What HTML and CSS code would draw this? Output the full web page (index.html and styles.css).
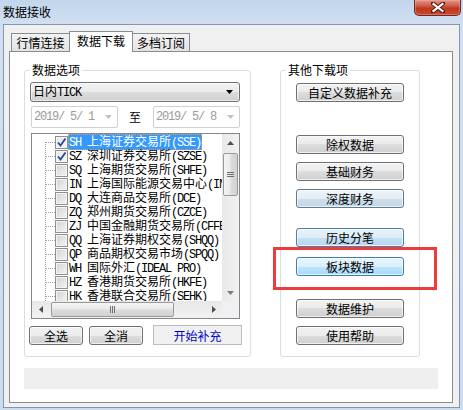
FILE: index.html
```html
<!DOCTYPE html>
<html lang="zh-CN">
<head>
<meta charset="utf-8">
<title>数据接收</title>
<link rel="stylesheet" href="styles.css">
</head>
<body>
<div class="titlebar">
  <span class="title">数据接收</span>
  <button class="close" aria-label="关闭">
    <svg width="14" height="11" viewBox="0 0 14 11"><path d="M2 1.5 L12 9.5 M12 1.5 L2 9.5" stroke="#4a1a12" stroke-width="4" stroke-linecap="square"/><path d="M2.5 2 L11.5 9 M11.5 2 L2.5 9" stroke="#fff" stroke-width="2.2" stroke-linecap="square"/></svg>
  </button>
</div>
<div class="client">
  <div class="tabs">
    <div class="tab">行情连接</div>
    <div class="tab active">数据下载</div>
    <div class="tab">多档订阅</div>
  </div>
  <div class="panel">
    <div class="groups">
      <section class="group group-left">
        <div class="group-title">数据选项</div>
        <div class="combo">
          <span>日内<span class="a">TICK</span></span>
          <svg width="7" height="4" viewBox="0 0 7 4"><path d="M0 0 H7 L3.5 4Z" fill="#000"/></svg>
        </div>
        <div class="date-row">
          <div class="date"><span class="a">2019/ 5/ 1</span><svg width="7" height="4" viewBox="0 0 7 4"><path d="M0 0 H7 L3.5 4Z" fill="#c2c2c2"/></svg></div>
          <span class="to">至</span>
          <div class="date date2"><span class="a">2019/ 5/ 8</span><svg width="7" height="4" viewBox="0 0 7 4"><path d="M0 0 H7 L3.5 4Z" fill="#c2c2c2"/></svg></div>
        </div>
        <div class="list">
          <div class="items">
            <div class="row"><span class="branch"></span><span class="cb checked"><svg width="11" height="11" viewBox="0 0 11 11"><path d="M2 5.5 L4.5 8.5 L9.5 1.5" fill="none" stroke="#2b4c9c" stroke-width="1.9"/></svg></span><span class="label sel"><span class="a">SH </span>上海证券交易所<span class="a">(SSE)</span></span></div>
            <div class="row"><span class="branch"></span><span class="cb checked"><svg width="11" height="11" viewBox="0 0 11 11"><path d="M2 5.5 L4.5 8.5 L9.5 1.5" fill="none" stroke="#2b4c9c" stroke-width="1.9"/></svg></span><span class="label"><span class="a">SZ </span>深圳证券交易所<span class="a">(SZSE)</span></span></div>
            <div class="row"><span class="branch"></span><span class="cb"></span><span class="label"><span class="a">SQ </span>上海期货交易所<span class="a">(SHFE)</span></span></div>
            <div class="row"><span class="branch"></span><span class="cb"></span><span class="label"><span class="a">IN </span>上海国际能源交易中心<span class="a">(INE)</span></span></div>
            <div class="row"><span class="branch"></span><span class="cb"></span><span class="label"><span class="a">DQ </span>大连商品交易所<span class="a">(DCE)</span></span></div>
            <div class="row"><span class="branch"></span><span class="cb"></span><span class="label"><span class="a">ZQ </span>郑州期货交易所<span class="a">(CZCE)</span></span></div>
            <div class="row"><span class="branch"></span><span class="cb"></span><span class="label"><span class="a">ZJ </span>中国金融期货交易所<span class="a">(CFFEX)</span></span></div>
            <div class="row"><span class="branch"></span><span class="cb"></span><span class="label"><span class="a">QQ </span>上海证券期权交易<span class="a">(SHQQ)</span></span></div>
            <div class="row"><span class="branch"></span><span class="cb"></span><span class="label"><span class="a">QP </span>商品期权交易市场<span class="a">(SPQQ)</span></span></div>
            <div class="row"><span class="branch"></span><span class="cb"></span><span class="label"><span class="a">WH </span>国际外汇<span class="a">(IDEAL PRO)</span></span></div>
            <div class="row"><span class="branch"></span><span class="cb"></span><span class="label"><span class="a">HZ </span>香港期货交易所<span class="a">(HKFE)</span></span></div>
            <div class="row"><span class="branch"></span><span class="cb"></span><span class="label"><span class="a">HK </span>香港联合交易所<span class="a">(SEHK)</span></span></div>
          </div>
          <div class="vscroll">
            <span class="sb-btn"><svg width="7" height="4" viewBox="0 0 7 4"><path d="M0 4 L3.5 0 L7 4Z" fill="#4d4d4d"/></svg></span>
            <span class="vthumb"><svg width="7" height="5" viewBox="0 0 7 5"><path d="M0 0.5 H7 M0 2.5 H7 M0 4.5 H7" stroke="#6f6f6f" stroke-width="1"/></svg></span>
            <span class="sb-fill"></span>
            <span class="sb-btn"><svg width="7" height="4" viewBox="0 0 7 4"><path d="M0 0 H7 L3.5 4Z" fill="#7a7a7a"/></svg></span>
          </div>
          <div class="hscroll">
            <span class="sb-btn"><svg width="4" height="7" viewBox="0 0 4 7"><path d="M4 0 L0 3.5 L4 7Z" fill="#4d4d4d"/></svg></span>
            <span class="hthumb"><svg width="5" height="7" viewBox="0 0 5 7"><path d="M0.5 0 V7 M2.5 0 V7 M4.5 0 V7" stroke="#6f6f6f" stroke-width="1"/></svg></span>
            <span class="sb-fill"></span>
            <span class="sb-btn"><svg width="4" height="7" viewBox="0 0 4 7"><path d="M0 0 L4 3.5 L0 7Z" fill="#4d4d4d"/></svg></span>
          </div>
          <div class="corner"></div>
        </div>
        <div class="btn-row">
          <button class="btn small">全选</button>
          <button class="btn small">全消</button>
          <button class="btn-flat">开始补充</button>
        </div>
      </section>
      <section class="group group-right">
        <div class="group-title">其他下载项</div>
        <button class="btn wide m1">自定义数据补充</button>
        <button class="btn wide m2">除权数据</button>
        <button class="btn wide m3">基础财务</button>
        <button class="btn wide m3 soft">深度财务</button>
        <button class="btn wide m4 soft2">历史分笔</button>
        <button class="btn wide m5 hot">板块数据</button>
        <button class="btn wide m6">数据维护</button>
        <button class="btn wide m3">使用帮助</button>
      </section>
    </div>
    <div class="status"></div>
    <div class="mark"></div>
  </div>
</div>
</body>
</html>
```

FILE: styles.css
```css
* { box-sizing: border-box; }
html, body { margin: 0; }
body {
  width: 463px;
  height: 410px;
  overflow: hidden;
  background: linear-gradient(180deg, #c2d6ec 0, #d0e0f2 24px, #cadcf0 100%);
  font-family: "Noto Sans CJK SC", "Noto Sans CJK JP", sans-serif;
  font-size: 12px;
  color: #000;
}
button { font: inherit; color: inherit; margin: 0; }
.a {
  font-family: "Liberation Mono", monospace;
  font-size: 12px;
  letter-spacing: -1.2px;
}

/* title bar */
.titlebar { display: flex; justify-content: space-between; height: 24px; }
.title { margin: 4px 0 0 3px; line-height: 16px; }
.close {
  width: 47px;
  height: 16px;
  margin-right: 2px;
  padding: 0;
  border: 1px solid #6d2a1f;
  border-top: none;
  border-radius: 0 0 5px 5px;
  background: linear-gradient(#e3948a, #d05a45 40%, #bf371c 55%, #c84a30);
  box-shadow: inset 0 0 0 1px rgba(255, 190, 180, .35);
  display: flex;
  align-items: center;
  justify-content: center;
}

/* client area */
.client {
  margin-left: 3px;
  width: 457px;
  height: 384px;
  border: 1px solid #8595aa;
  background: #f0f0f0;
  padding: 6px 0 0 5px;
}
.tabs {
  display: flex;
  align-items: flex-end;
  height: 21px;
  padding-left: 2px;
  margin-bottom: -1px;
  position: relative;
  z-index: 1;
}
.tab {
  width: 59px;
  height: 18px;
  margin-bottom: 1px;
  padding-top: 1px;
  border: 1px solid #898c95;
  border-bottom: none;
  background: linear-gradient(#f3f3f3, #e3e3e3);
  line-height: 16px;
  text-align: center;
}
.tab + .tab { margin-left: -1px; }
.tab.active {
  width: 64px;
  height: 21px;
  margin-bottom: 0;
  padding-top: 0;
  background: #fff;
  line-height: 18px;
  position: relative;
  z-index: 1;
}
.tab:last-child { width: 58px; }

.panel {
  width: 444px;
  height: 352px;
  border: 1px solid #898c95;
  background: #fff;
  padding: 18px 0 0 14px;
  position: relative;
}
.groups { display: flex; gap: 29px; }
.group {
  height: 287px;
  border: 1px solid #d5dfe5;
  border-radius: 3px;
}
.group-left { width: 227px; }
.group-right {
  width: 140px;
  display: flex;
  flex-direction: column;
  align-items: flex-start;
}
.group-title {
  width: max-content;
  margin: -8px 0 0 5px;
  padding: 0 2px;
  background: #fff;
  line-height: 14px;
}
.status {
  margin-top: 11px;
  width: 414px;
  height: 21px;
  background: #efefef;
}
.mark {
  position: absolute;
  left: 263px;
  top: 195px;
  width: 164px;
  height: 43px;
  border: 3px solid #ee3c3c;
}

/* combo */
.combo {
  display: flex;
  align-items: center;
  justify-content: space-between;
  margin: 5px 0 0 5px;
  width: 210px;
  height: 20px;
  padding: 0 6px 0 2px;
  border: 1px solid #707070;
  border-radius: 3px;
  background: linear-gradient(#f2f2f2, #ebebeb 50%, #dddddd 50%, #cfcfcf);
  box-shadow: inset 0 0 0 1px rgba(255, 255, 255, .6);
  line-height: 16px;
}
.date-row {
  display: flex;
  align-items: center;
  margin: 4px 0 0 6px;
  height: 22px;
}
.date {
  display: flex;
  align-items: center;
  justify-content: space-between;
  width: 87px;
  height: 22px;
  padding: 0 5px 0 2px;
  border: 1px solid #d0d0d0;
  border-radius: 2px;
  background: #fff;
  color: #9a9a9a;
}
.to { margin: 0 12px 0 11px; line-height: 14px; }

/* list */
.list {
  display: grid;
  grid-template-columns: 1fr 17px;
  grid-template-rows: 1fr 17px;
  margin: 5px 0 0 6px;
  width: 209px;
  height: 186px;
  border: 1px solid #828790;
  background: #fff;
}
.items {
  overflow: hidden;
  padding-top: 1px;
  background: repeating-linear-gradient(180deg, #a0a0a0 0 1px, transparent 1px 2px) no-repeat 13px 8px / 1px 100%;
}
.row {
  display: flex;
  align-items: center;
  height: 14px;
  white-space: nowrap;
}
.branch {
  flex: none;
  width: 23px;
  height: 14px;
  background: repeating-linear-gradient(90deg, #a0a0a0 0 1px, transparent 1px 2px) no-repeat 14px 7px / 9px 1px;
}
.cb {
  flex: none;
  width: 13px;
  height: 13px;
  border: 1px solid #8e8f8f;
  background: linear-gradient(135deg, #d0d3d8, #f4f4f4);
  box-shadow: inset 0 0 0 1px #f4f4f4;
  display: flex;
  align-items: center;
  justify-content: center;
}
.cb.checked { background: linear-gradient(135deg, #e4e6ea, #fafafa); }
.label {
  flex: none;
  padding: 0 1px;
  line-height: 13px;
}
.label.sel {
  background: #3399ff;
  color: #fff;
  outline: 1px dotted #d9a15c;
  outline-offset: -1px;
}
.vscroll, .hscroll {
  display: flex;
  background: linear-gradient(90deg, #e8e8e8, #f2f2f2);
}
.vscroll { flex-direction: column; }
.hscroll { background: linear-gradient(180deg, #e8e8e8, #f2f2f2); }
.sb-btn {
  flex: none;
  width: 17px;
  height: 17px;
  display: flex;
  align-items: center;
  justify-content: center;
}
.sb-fill { flex: 1; }
.vthumb, .hthumb {
  flex: none;
  display: flex;
  align-items: center;
  justify-content: center;
  border: 1px solid #9a9a9a;
  border-radius: 2px;
}
.vthumb {
  width: 15px;
  height: 43px;
  margin: 2px 0 0 1px;
  background: linear-gradient(90deg, #f5f5f5, #eaeaea 45%, #dcdcdc 55%, #d2d2d2);
}
.hthumb {
  width: 123px;
  height: 15px;
  margin: 1px 0 0 2px;
  background: linear-gradient(180deg, #f5f5f5, #eaeaea 45%, #dcdcdc 55%, #d2d2d2);
}
.corner { background: #f0f0f0; }

/* buttons */
.btn {
  height: 19px;
  padding: 0;
  border: 1px solid #707070;
  border-radius: 3px;
  background: linear-gradient(#f2f2f2, #ebebeb 50%, #dddddd 50%, #cfcfcf);
  box-shadow: inset 0 0 0 1px rgba(255, 255, 255, .65);
  line-height: 16px;
  text-align: center;
}
.btn.small { width: 54px; }
.btn.small + .btn.small { margin-left: 6px; }
.btn-row { display: flex; margin: 7px 0 0 4px; }
.btn-flat {
  width: 89px;
  height: 20px;
  margin: -1px 0 0 10px;
  padding: 0;
  border: 1px solid #bdbdbd;
  background: #f0f0f0;
  color: #0000c8;
  line-height: 17px;
}
.btn.wide { width: 108px; margin-left: 15px; }
.m1 { margin-top: 6px; }
.m2 { margin-top: 33px; }
.m3 { margin-top: 8px; }
.m4 { margin-top: 20px; }
.m5 { margin-top: 10px; }
.m6 { margin-top: 23px; }
.btn.soft {
  border-color: #5f7a92;
  background: linear-gradient(#eef4f9, #e3edf5 50%, #cfdfeb 50%, #c2d6e6);
}
.btn.soft2 {
  border-color: #4b7fa8;
  background: linear-gradient(#eaf4fb, #dcecf8 50%, #c6e0f3 50%, #b6d6ef);
}
.btn.hot {
  border-color: #3c7fb1;
  background: linear-gradient(#eaf6fd, #d9f0fc 50%, #bee6fd 50%, #a7d9f5);
  box-shadow: inset 0 0 0 1px rgba(255, 255, 255, .7);
}
```
